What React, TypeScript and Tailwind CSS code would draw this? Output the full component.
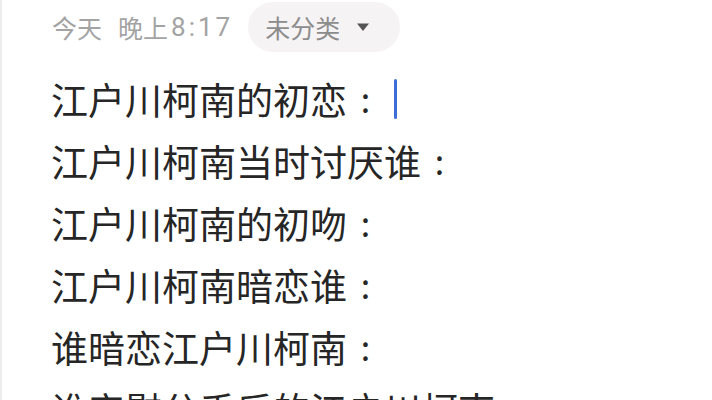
import React from "react";

const lines = [
  "江户川柯南的初恋",
  "江户川柯南当时讨厌谁",
  "江户川柯南的初吻",
  "江户川柯南暗恋谁",
  "谁暗恋江户川柯南",
  "谁安慰分手后的江户川柯南",
];

export default function App() {
  return (
    <div
      className="w-[712px] h-[400px] overflow-hidden bg-white border-l-2 border-[#ececec] relative"
      style={{ fontFamily: '"Noto Sans CJK SC", "Noto Sans", sans-serif' }}
    >
      <div className="flex items-center h-[50px] mt-[2px] pl-[50px]">
        <div className="flex items-center text-[25px] text-[#a3a3a3] leading-none">
          <span>今天</span>
          <span className="ml-[16px]">晚上</span>
          <span
            style={{ fontFamily: "Roboto, sans-serif" }}
            className="text-[26px] ml-[3px] tracking-[3px]"
          >
            8:17
          </span>
        </div>
        <div className="ml-[15px] h-[50px] w-[152px] rounded-full bg-[#f6f3f5] flex items-center pl-[17px]">
          <span className="text-[25px] text-[#8c8c8c] leading-none">未分类</span>
          <svg width="14" height="10" viewBox="0 0 14 10" className="ml-[16px]">
            <path d="M1 1.5 L13 1.5 L7 9 Z" fill="#555" />
          </svg>
        </div>
      </div>
      <div className="mt-[16px] pl-[49px] text-[37px] leading-[62px] text-[#262626]">
        {lines.map((t, i) => (
          <div key={i} className="flex items-center whitespace-nowrap">
            <span>{t}</span>
            <span className="inline-block w-[37px] text-center text-[34px]">:</span>
            {i === 0 && (
              <span className="inline-block w-[3px] h-[40px] bg-[#3b6fd6] rounded-sm ml-[10px]" />
            )}
          </div>
        ))}
      </div>
    </div>
  );
}
